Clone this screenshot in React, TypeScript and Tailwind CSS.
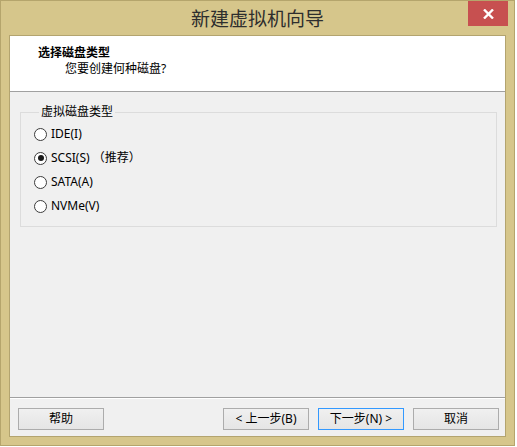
import React from "react";

const font = { fontFamily: '"Noto Sans", "Noto Sans CJK SC", sans-serif' };

const options = [
  { label: "IDE(I)", checked: false },
  { label: "SCSI(S) （推荐）", checked: true },
  { label: "SATA(A)", checked: false },
  { label: "NVMe(V)", checked: false },
];

function Radio({ checked }: { checked: boolean }) {
  return (
    <span className="w-[13px] h-[13px] rounded-full border border-[#3c3c3c] bg-white flex items-center justify-center shrink-0">
      {checked && <span className="w-[6px] h-[6px] rounded-full bg-[#1a1a1a]" />}
    </span>
  );
}

function WinButton({ children, primary }: { children: React.ReactNode; primary?: boolean }) {
  return (
    <button
      className={`w-[86px] h-[22px] text-[12px] leading-none text-black bg-gradient-to-b from-[#f0f0f0] to-[#e5e5e5] border flex items-center justify-center ${
        primary ? "border-[#3399ff]" : "border-[#acacac]"
      }`}
    >
      {children}
    </button>
  );
}

export default function App() {
  return (
    <div className="w-[517px] h-[447px] bg-white" style={font}>
      <div className="w-[515px] h-[446px] border border-[#b5a56c] bg-[#d6c68b] flex flex-col relative">
        {/* title bar */}
        <div className="h-[34px] flex items-center justify-center">
          <span className="text-[19px] leading-none text-[#2e2e2e] mt-[2px]">新建虚拟机向导</span>
        </div>
        <div className="absolute top-0 right-[6px] w-[40px] h-[25px] bg-[#c75050] flex items-center justify-center">
          <svg width="11" height="10" viewBox="0 0 11 10">
            <path d="M1 0.5 L10 9.5 M10 0.5 L1 9.5" stroke="white" strokeWidth="2.4" />
          </svg>
        </div>

        {/* client area */}
        <div className="mx-[8px] mb-[8px] border border-[#b3a46f] bg-[#f0f0f0] flex-1 flex flex-col">
          <div className="h-[55px] bg-white pt-[9px] text-[12px] leading-[16px] text-black">
            <div className="pl-[28px] font-bold">选择磁盘类型</div>
            <div className="pl-[55px]">您要创建何种磁盘?</div>
          </div>
          <div className="h-px bg-[#a0a0a0]" />

          <div className="flex-1 pl-[10px] pr-[8px] pt-[12px]">
            <fieldset className="border border-[#dcdcdc] pl-[13px] pb-[8px]">
              <legend className="ml-[5px] px-[2px] text-[12px] leading-[16px] text-black">虚拟磁盘类型</legend>
              <div className="pt-[2px] flex flex-col">
                {options.map((o) => (
                  <label key={o.label} className="h-[24px] flex items-center gap-[4px] text-[12px] text-black">
                    <Radio checked={o.checked} />
                    <span>{o.label}</span>
                  </label>
                ))}
              </div>
            </fieldset>
          </div>

          <div className="h-px bg-[#a0a0a0]" />
          <div className="h-px bg-white" />
          <div className="pl-[8px] pr-[6px] pt-[9px] pb-[6px] flex items-center">
            <WinButton>帮助</WinButton>
            <div className="flex-1" />
            <div className="flex gap-[9px]">
              <WinButton>&lt; 上一步(B)</WinButton>
              <WinButton primary>下一步(N) &gt;</WinButton>
              <WinButton>取消</WinButton>
            </div>
          </div>
        </div>
      </div>
    </div>
  );
}
